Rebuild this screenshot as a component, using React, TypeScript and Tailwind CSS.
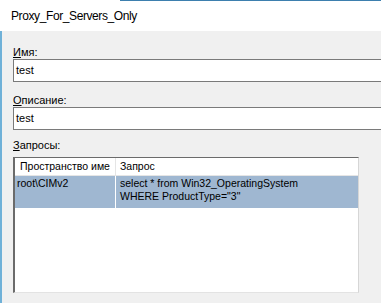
const UI = { fontFamily: '"Liberation Sans", Arial, sans-serif' };

function Label({ accel, rest }: { accel: string; rest: string }) {
  return (
    <div className="h-[14px] text-[11px] leading-[14px] text-black" style={UI}>
      <span className="underline underline-offset-[1px]">{accel}</span>
      {rest}
    </div>
  );
}

function TextBox({ value }: { value: string }) {
  return (
    <div className="h-[23px] border-y border-l border-[#7a7a7a] bg-white pl-[2px] flex items-center text-[11px] text-black" style={UI}>
      {value}
    </div>
  );
}

export default function App() {
  return (
    <div className="w-[381px] h-[303px] overflow-hidden bg-[#f0f0f0] flex flex-col">
      <div className="h-[31px] bg-white flex flex-col shrink-0">
        <div className="flex h-px">
          <div className="w-[120px]" />
          <div className="flex-1 bg-[#3d7fae]" />
        </div>
        <div className="pl-[11px] pt-[8px] text-[12px] leading-[15px] tracking-[-0.4px] text-black" style={UI}>
          Proxy_For_Servers_Only
        </div>
      </div>

      <div className="flex-1 border-l-2 border-[#6fb1d8] pl-[11px] pt-[14px] flex flex-col">
        <Label accel="И" rest="мя:" />
        <TextBox value="test" />

        <div className="mt-[11px]">
          <Label accel="О" rest="писание:" />
        </div>
        <TextBox value="test" />

        <div className="mt-[8px]">
          <Label accel="З" rest="апросы:" />
        </div>

        <div className="mt-[5px] w-[346px] h-[136px] bg-white border-t border-l-2 border-[#6b6b6b] border-r border-r-[#d6d6d6] border-b border-b-[#e3e3e3] flex flex-col text-[10.5px] text-black" style={UI}>
          <div className="h-[18px] flex border-b border-[#e5e5e5] shrink-0">
            <div className="w-[101px] pl-[5px] flex items-center overflow-hidden whitespace-nowrap border-r border-[#e5e5e5]">
              Пространство име
            </div>
            <div className="flex-1 pl-[4px] flex items-center">Запрос</div>
          </div>
          <div className="flex h-[32px] bg-[#9fb7d1]">
            <div className="w-[101px] pl-[2px] pt-[1px] leading-[13px] border-r border-white">
              root\CIMv2
            </div>
            <div className="flex-1 pl-[4px] pt-[1px] leading-[13px]">
              <div>select * from Win32_OperatingSystem</div>
              <div>WHERE ProductType="3"</div>
            </div>
          </div>
        </div>
      </div>
    </div>
  );
}
